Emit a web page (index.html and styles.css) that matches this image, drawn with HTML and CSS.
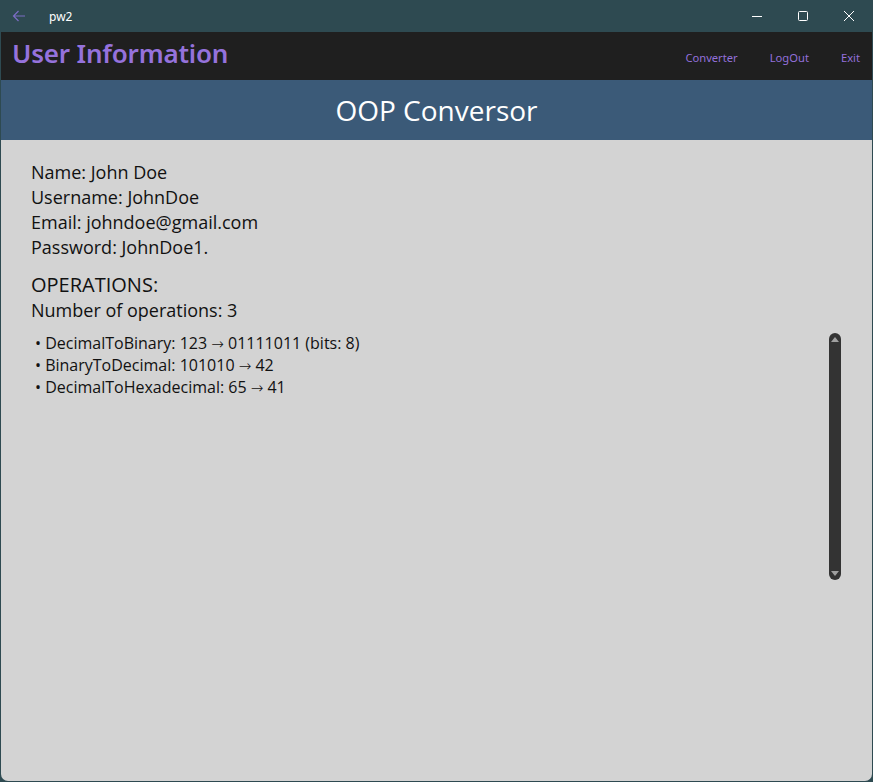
FILE: index.html
```html
<!DOCTYPE html>
<html>
<head>
<meta charset="utf-8">
<link rel="stylesheet" href="styles.css">
</head>
<body>
<div class="window">
  <div class="titlebar">
    <svg class="back" width="16" height="16" viewBox="0 0 16 16"><path d="M14 8H2.5M7.5 3L2.5 8l5 5" fill="none" stroke="#7b6cc4" stroke-width="1.2"/></svg>
    <span class="apptitle">pw2</span>
    <div class="controls">
      <svg class="ctl" width="46" height="32" viewBox="0 0 46 32"><path d="M18 16.5h10" stroke="#fff" stroke-width="1"/></svg>
      <svg class="ctl" width="46" height="32" viewBox="0 0 46 32"><rect x="18.5" y="11.5" width="9" height="9" rx="1" fill="none" stroke="#fff" stroke-width="1"/></svg>
      <svg class="ctl" width="46" height="32" viewBox="0 0 46 32"><path d="M18 11l10 10M28 11L18 21" stroke="#fff" stroke-width="1"/></svg>
    </div>
  </div>
  <div class="app">
    <header class="topbar">
      <h1 class="brand">User Information</h1>
      <nav class="nav">
        <a class="navlink">Converter</a>
        <a class="navlink">LogOut</a>
        <a class="navlink">Exit</a>
      </nav>
    </header>
    <div class="banner">OOP Conversor</div>
    <main class="content">
      <div class="info">
        <div>Name: John Doe</div>
        <div>Username: JohnDoe</div>
        <div>Email: johndoe@gmail.com</div>
        <div>Password: JohnDoe1.</div>
      </div>
      <div class="ops-title">OPERATIONS:</div>
      <div class="ops-count">Number of operations: 3</div>
      <div class="ops-area">
        <ul class="ops">
          <li>• DecimalToBinary: 123 <span class="arr">→</span> 01111011 (bits: 8)</li>
          <li>• BinaryToDecimal: 101010 <span class="arr">→</span> 42</li>
          <li>• DecimalToHexadecimal: 65 <span class="arr">→</span> 41</li>
        </ul>
        <div class="scrollbar">
          <span class="arrow up"></span>
          <span class="arrow down"></span>
        </div>
      </div>
    </main>
  </div>
</div>
</body>
</html>
```
FILE: styles.css
```css
html, body {
  margin: 0;
  padding: 0;
  height: 100%;
  background: #2e4a51;
}
.window {
  width: 873px;
  height: 782px;
  display: flex;
  flex-direction: column;
  background: #2e4a51;
  overflow: hidden;
}
.titlebar {
  height: 32px;
  flex: none;
  display: flex;
  align-items: center;
}
.back {
  margin-left: 11px;
}
.apptitle {
  margin-left: 22px;
  font-family: "Noto Sans", sans-serif;
  font-size: 12px;
  color: #fff;
}
.controls {
  margin-left: auto;
  display: flex;
  margin-right: 1px;
}
.ctl {
  display: block;
}
.app {
  flex: 1;
  margin: 0 1px 1px 1px;
  background: #d3d3d3;
  border-radius: 0 0 7px 7px;
  display: flex;
  flex-direction: column;
  overflow: hidden;
}
.topbar {
  height: 48px;
  background: #1f1f1f;
  display: flex;
  align-items: center;
  flex: none;
}
.brand {
  margin: 0 0 6px 11px;
  font-family: "Noto Sans", sans-serif;
  font-weight: 600;
  font-size: 26px;
  color: #9572dc;
  letter-spacing: -0.2px;
}
.nav {
  margin-left: auto;
  display: flex;
  gap: 32px;
  margin-right: 12px;
  margin-top: 2px;
}
.navlink {
  font-family: "Noto Sans", sans-serif;
  font-size: 11.2px;
  color: #9370db;
}
.banner {
  height: 60px;
  flex: none;
  background: #3b5a78;
  color: #fff;
  display: flex;
  align-items: center;
  justify-content: center;
  font-family: "Open Sans", sans-serif;
  font-size: 28px;
}
.content {
  flex: 1;
  padding: 20px 31px 0 30px;
  font-family: "Open Sans", sans-serif;
  color: #111;
}
.info {
  font-size: 18px;
  line-height: 25px;
}
.ops-title {
  margin-top: 12px;
  font-size: 20px;
  line-height: 25px;
}
.ops-count {
  font-size: 18px;
  line-height: 26px;
}
.ops-area {
  display: flex;
  margin-top: 9px;
}
.ops {
  list-style: none;
  margin: 0;
  padding: 0 0 0 4px;
  flex: 1;
  font-size: 16px;
  line-height: 22px;
}
.arr {
  font-family: "DejaVu Sans", sans-serif;
  font-weight: 200;
  font-size: 15px;
  line-height: 0;
}
.scrollbar {
  width: 12px;
  height: 247px;
  margin-top: 1px;
  background: #333;
  border-radius: 6px;
  display: flex;
  flex-direction: column;
  justify-content: space-between;
  align-items: center;
  padding: 4px 0;
  box-sizing: border-box;
}
.arrow {
  width: 0;
  height: 0;
  border-left: 4px solid transparent;
  border-right: 4px solid transparent;
}
.arrow.up {
  border-bottom: 5px solid #a0a0a0;
}
.arrow.down {
  border-top: 5px solid #a0a0a0;
}
```
